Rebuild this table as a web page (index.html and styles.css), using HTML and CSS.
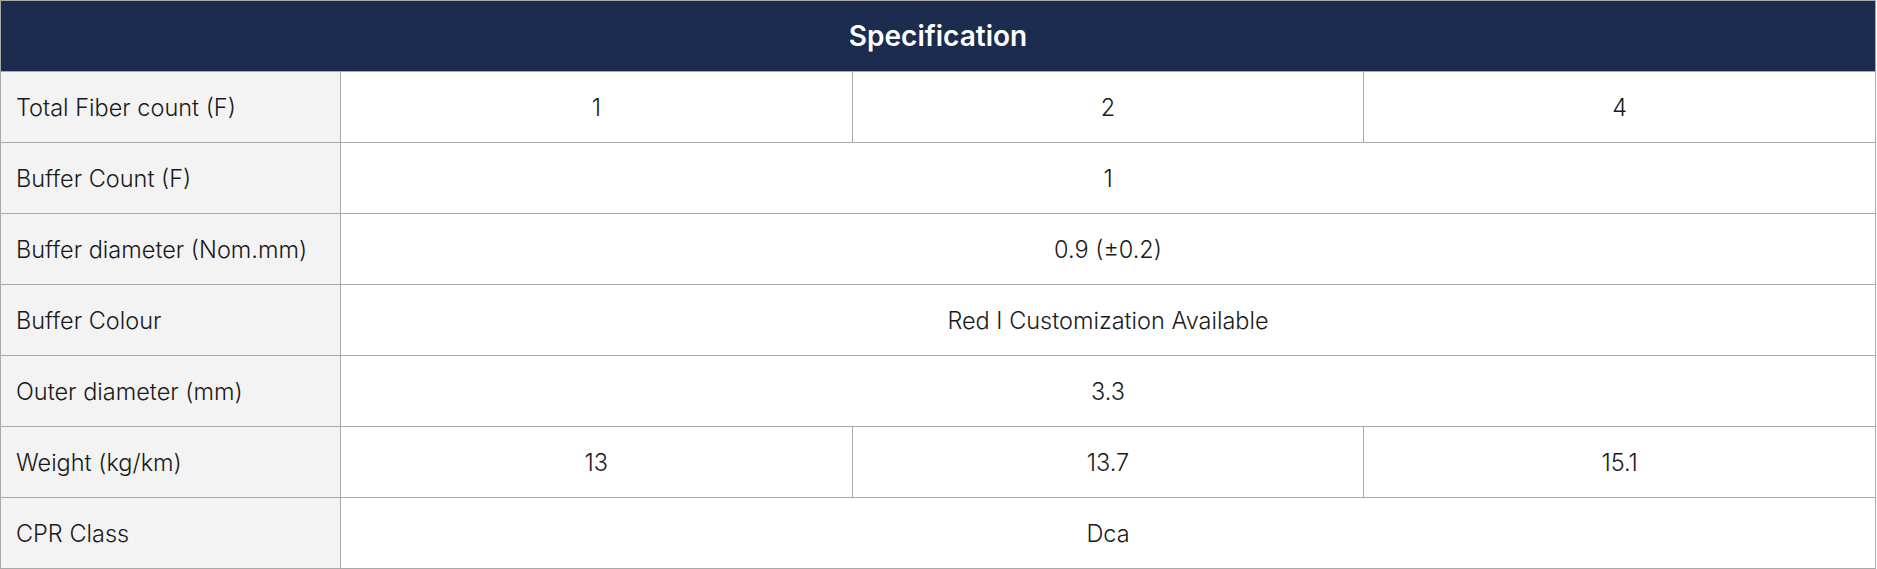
FILE: index.html
```html
<!DOCTYPE html>
<html>
<head>
<meta charset="utf-8">
<link rel="stylesheet" href="styles.css">
</head>
<body>
<table class="spec">
  <colgroup>
    <col class="c-label">
    <col class="c-val">
    <col class="c-val">
    <col class="c-val">
  </colgroup>
  <thead>
    <tr><th colspan="4" class="title">Specification</th></tr>
  </thead>
  <tbody>
    <tr><td class="label">Total Fiber count (F)</td><td>1</td><td>2</td><td>4</td></tr>
    <tr><td class="label">Buffer Count (F)</td><td colspan="3">1</td></tr>
    <tr><td class="label">Buffer diameter (Nom.mm)</td><td colspan="3">0.9 (±0.2)</td></tr>
    <tr><td class="label">Buffer Colour</td><td colspan="3">Red I Customization Available</td></tr>
    <tr><td class="label">Outer diameter (mm)</td><td colspan="3">3.3</td></tr>
    <tr><td class="label">Weight (kg/km)</td><td>13</td><td>13.7</td><td>15.1</td></tr>
    <tr><td class="label">CPR Class</td><td colspan="3">Dca</td></tr>
  </tbody>
</table>
</body>
</html>
```
FILE: styles.css
```css
html, body {
  margin: 0;
  padding: 0;
  background: #ffffff;
}
body {
  font-family: Inter, "Noto Sans", "Liberation Sans", sans-serif;
  color: #1a1a1a;
}
.spec {
  border-collapse: collapse;
  table-layout: fixed;
  width: 1876px;
  margin: 0;
}
.c-label { width: 340px; }
.spec th, .spec td {
  border: 1px solid #a9a9a9;
  height: 71px;
  padding: 0;
  box-sizing: border-box;
}
.title {
  background: #1b2c4e;
  color: #ffffff;
  font-size: 28px;
  font-weight: 600;
  text-align: center;
  padding-top: 3px;
  border-color: #8a8f99;
}
.spec td {
  font-size: 23.5px;
  font-weight: 300;
  text-align: center;
  background: #ffffff;
}
.spec td.label {
  text-align: left;
  padding-left: 15px;
  background: #f3f3f3;
}
```
